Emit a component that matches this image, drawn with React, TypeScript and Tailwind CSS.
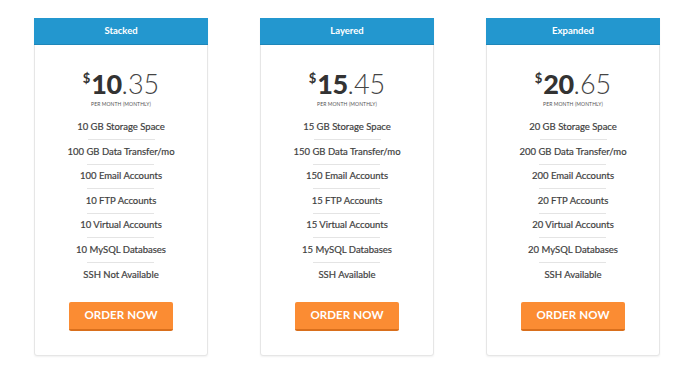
import React from 'react';

interface Plan {
  name: string;
  dollars: string;
  cents: string;
  features: string[];
}

const plans: Plan[] = [
  {
    name: 'Stacked',
    dollars: '10',
    cents: '35',
    features: [
      '10 GB Storage Space',
      '100 GB Data Transfer/mo',
      '100 Email Accounts',
      '10 FTP Accounts',
      '10 Virtual Accounts',
      '10 MySQL Databases',
      'SSH Not Available',
    ],
  },
  {
    name: 'Layered',
    dollars: '15',
    cents: '45',
    features: [
      '15 GB Storage Space',
      '150 GB Data Transfer/mo',
      '150 Email Accounts',
      '15 FTP Accounts',
      '15 Virtual Accounts',
      '15 MySQL Databases',
      'SSH Available',
    ],
  },
  {
    name: 'Expanded',
    dollars: '20',
    cents: '65',
    features: [
      '20 GB Storage Space',
      '200 GB Data Transfer/mo',
      '200 Email Accounts',
      '20 FTP Accounts',
      '20 Virtual Accounts',
      '20 MySQL Databases',
      'SSH Available',
    ],
  },
];

function PlanCard({ plan }: { plan: Plan }) {
  return (
    <div className="w-[174px] h-[338px] flex flex-col bg-white border border-[#e6e6e6] rounded-b-[3px] shadow-[0_1px_2px_rgba(0,0,0,0.06)]">
      {/* Header */}
      <div className="h-[27px] -mx-px -mt-px bg-[#2397cf] border-b border-[#1f86b8] flex items-center justify-center">
        <span className="text-[9.5px] font-bold text-white">{plan.name}</span>
      </div>

      {/* Price */}
      <div className="mt-[25px] flex flex-col items-center">
        <div className="flex items-start text-[#333] leading-none">
          <span className="text-[13px] font-bold mt-[2px] mr-px">$</span>
          <span className="text-[27px] font-black tracking-[-0.5px]">{plan.dollars}</span>
          <span className="text-[27px] font-light text-[#444]">.{plan.cents}</span>
        </div>
        <div className="mt-[5px] text-[5px] leading-none uppercase text-[#555] tracking-[0.1px]">
          Per Month (Monthly)
        </div>
      </div>

      {/* Features */}
      <ul className="mt-[13px] flex flex-col items-center">
        {plan.features.map((f, i) => (
          <li key={f} className="flex flex-col items-center">
            <span className="text-[9.5px] leading-[14px] text-[#3f3f3f] [-webkit-text-stroke:0.2px_#3f3f3f]">{f}</span>
            {i < plan.features.length - 1 && (
              <div className="w-[67px] h-px bg-[#e4e4e4] mt-[5px] mb-[4.6px]" />
            )}
          </li>
        ))}
      </ul>

      {/* Button */}
      <div className="mt-[20px] flex justify-center">
        <button className="w-[104px] h-[29px] bg-[#fb8c33] border-b-2 border-[#d96f1c] rounded-[2px] text-white text-[11.5px] font-bold tracking-[0.1px]">
          ORDER NOW
        </button>
      </div>
    </div>
  );
}

export default function App() {
  return (
    <div
      className="w-[694px] h-[382px] bg-white flex justify-center gap-[52px] pt-[18px]"
      style={{ fontFamily: 'Lato, "Open Sans", sans-serif' }}
    >
      {plans.map((p) => (
        <PlanCard key={p.name} plan={p} />
      ))}
    </div>
  );
}
